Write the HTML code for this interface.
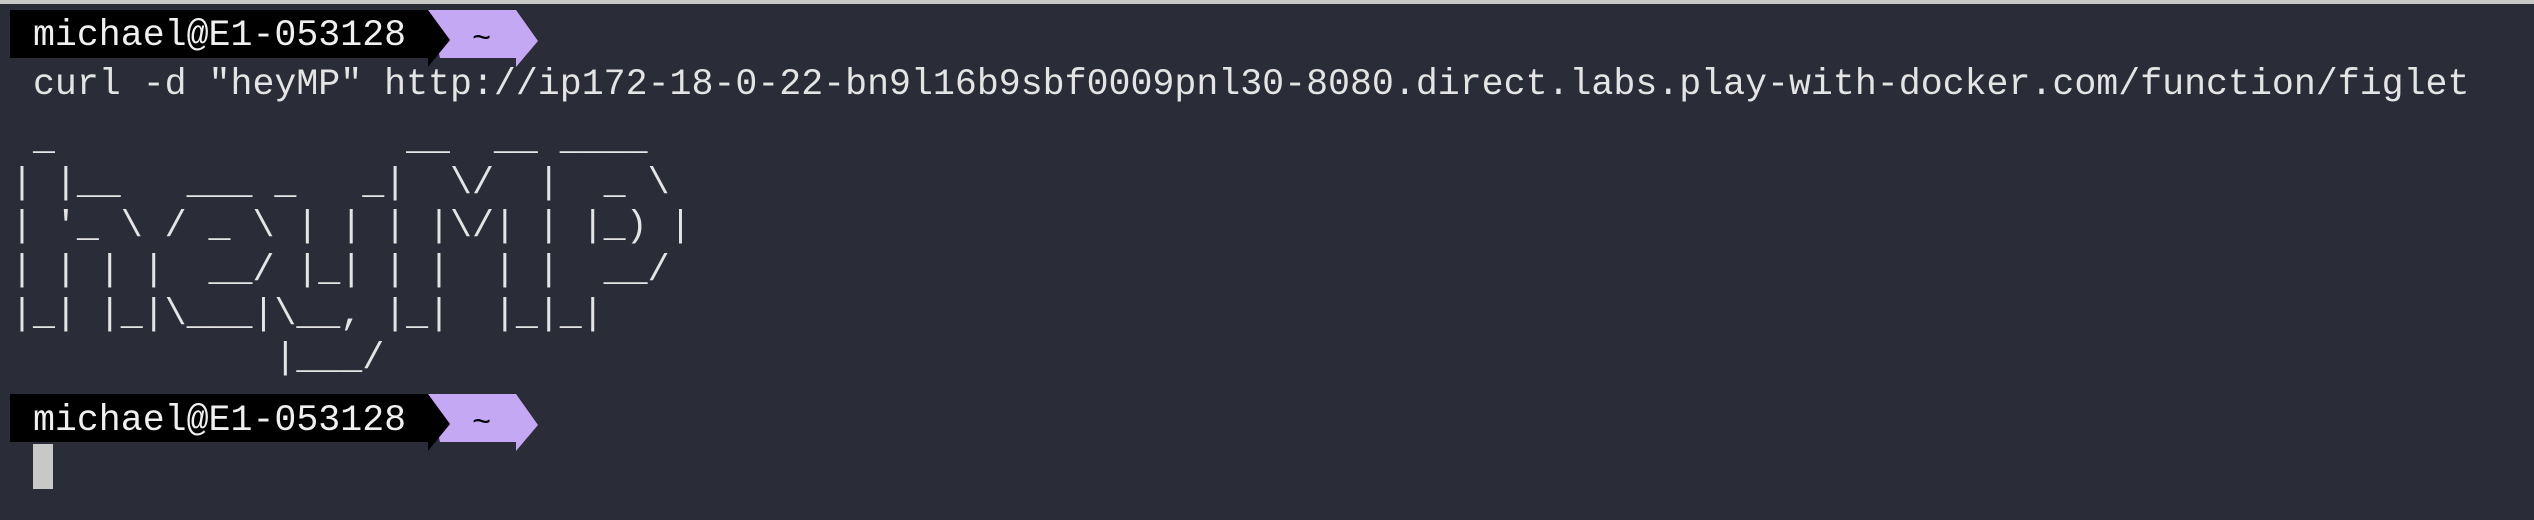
<!DOCTYPE html>
<html><head><meta charset="utf-8"><style>
html,body{margin:0;padding:0;width:2534px;height:520px;overflow:hidden;background:#2a2c38;}
#top{position:absolute;left:0;top:0;width:2534px;height:4px;background:#c9c9c9;}
.t{position:absolute;font-family:"Liberation Mono","DejaVu Sans Mono",monospace;font-size:36.6px;color:#e4e4e4;white-space:pre;line-height:44px;}
svg{position:absolute;left:0;top:0;}
</style></head><body>
<div id="top"></div>
<svg width="2534" height="520">
 <g>
  <polygon points="428,10 516,10 538,41 516,67 516,58 440,58" fill="#c4a8f4"/>
  <polygon points="10,10 428,10 450,40 428,67 428,58 10,58" fill="#000"/>
  <text x="472" y="48" font-family="Liberation Mono, monospace" font-size="32" fill="#000">~</text>
 </g>
 <g transform="translate(0,384)">
  <polygon points="428,10 516,10 538,41 516,67 516,58 440,58" fill="#c4a8f4"/>
  <polygon points="10,10 428,10 450,40 428,67 428,58 10,58" fill="#000"/>
  <text x="472" y="48" font-family="Liberation Mono, monospace" font-size="32" fill="#000">~</text>
 </g>
 <rect x="33" y="444" width="20" height="45" fill="#c8c8c8"/>
</svg>
<div class="t" style="left:11px;top:14px;color:#f0f0f0;"> michael@E1-053128</div>
<div class="t" style="left:11px;top:63px;"> curl -d "heyMP" http://ip172-18-0-22-bn9l16b9sbf0009pnl30-8080.direct.labs.play-with-docker.com/function/figlet</div>
<div class="t" style="left:11px;top:118px;line-height:43.7px;"> _                __  __ ____
| |__   ___ _   _|  \/  |  _ \
| '_ \ / _ \ | | | |\/| | |_) |
| | | |  __/ |_| | |  | |  __/
|_| |_|\___|\__, |_|  |_|_|
            |___/</div>
<div class="t" style="left:11px;top:399px;color:#f0f0f0;"> michael@E1-053128</div>
</body></html>
